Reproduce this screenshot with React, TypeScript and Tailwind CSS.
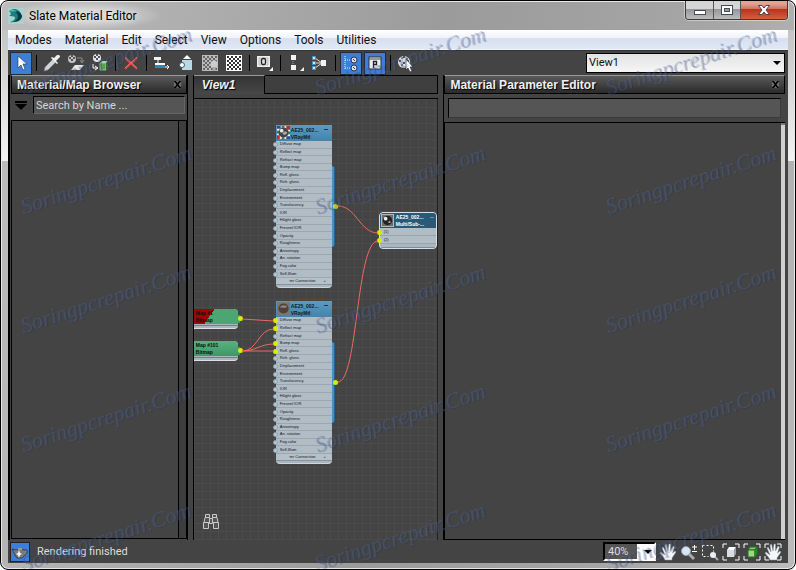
import React from 'react';

const menus = ['Modes', 'Material', 'Edit', 'Select', 'View', 'Options', 'Tools', 'Utilities'];

const slots = [
  'Diffuse map', 'Reflect map', 'Refract map', 'Bump map', 'Refl. gloss.', 'Refr. gloss.',
  'Displacement', 'Environment', 'Translucency', 'IOR', 'Hilight gloss', 'Fresnel IOR',
  'Opacity', 'Roughness', 'Anisotropy', 'An. rotation', 'Fog color', 'Self-Illum',
];

const stampColumns = [24, 318, 609];
const stampRows = [99, 218, 337, 456, 575];

type IconProps = { children: React.ReactNode; size?: string };

const Icon: React.FC<IconProps> = ({ children, size = 'w-[18px] h-[18px]' }) => (
  <svg viewBox="0 0 18 18" className={`${size} shrink-0`} aria-hidden="true">{children}</svg>
);

const ToolButton: React.FC<{ label: string; active?: boolean; children: React.ReactNode }> = ({ label, active, children }) => (
  <button
    type="button"
    aria-label={label}
    className={`h-[23px] flex items-center justify-center shrink-0 ${active ? 'w-[22px] mx-px bg-[#3c7fd9] border border-[#262b33]' : 'w-6'}`}
  >
    {children}
  </button>
);

const Separator = () => (
  <div className="w-[7px] h-6 flex items-center justify-center shrink-0">
    <div className="w-px h-4 bg-black"></div>
  </div>
);

const checkerCells = Array.from({ length: 49 }, (_, i) => i).filter((i) => i % 2 === 0);

const Checker: React.FC<{ light?: string; dark?: string }> = ({ light = '#fff', dark = '#333' }) => (
  <g>
    <rect x="1" y="1" width="16" height="16" fill={light} />
    {checkerCells.map((i) => (
      <rect key={i} x={2 + (i % 7) * 2} y={2 + Math.floor(i / 7) * 2} width="2" height="2" fill={dark} />
    ))}
  </g>
);

const Ball: React.FC<{ cx: number; cy: number; r?: number; light?: string }> = ({ cx, cy, r = 4, light = '#e6eaee' }) => (
  <g>
    <circle cx={cx} cy={cy} r={r} fill={light} />
    <path
      d={`M${cx - r + 1} ${cy - 2}h2v2h-2z M${cx + r - 3} ${cy - 2}h2v2h-2z M${cx - 1} ${cy}h2v2h-2z M${cx - 1} ${cy - r}h2v2h-2z`}
      fill="#555"
    />
  </g>
);

const Corners = () => (
  <path d="M1 5V1h4 M13 1h4v4 M17 13v4h-4 M5 17H1v-4" fill="none" stroke="#fff" strokeWidth="1" />
);

const Cube: React.FC<{ green?: boolean }> = ({ green }) => (
  <g stroke={green ? '#137a13' : 'none'}>
    <path d="M5 7l2-3h7l-2 3z" fill={green ? '#8bc46b' : '#fff'} />
    <path d="M5 7h7v7H5z" fill={green ? '#a8d18a' : '#d9dde3'} />
    <path d="M12 7l2-3v7l-2 3z" fill={green ? '#3d9b2f' : '#9aa1ab'} />
  </g>
);

const Hand = () => (
  <path
    d="M6 17c-1-3-3-4-5-7l1-1 4 3L3 5l1-1 3 5L6 2l1.500-1L9 8l1-7 1.500 0L11.500 8 14 3l1.500 1L13.500 10l2.500-2 1 1-4 6v2z"
    fill="#f4f6f8"
    stroke="#8d959c"
    strokeWidth=".5"
  />
);

const PanelTitle: React.FC<{ title: string }> = ({ title }) => (
  <div className="h-[19px] flex items-center justify-between pl-[5px] pr-1 border border-black border-t-[#999] bg-gradient-to-b from-[#5a5a5a] to-[#2b2b2b]">
    <h2 className="text-xs font-bold text-[#f0f0f0] [text-shadow:1px_1px_1px_#000] whitespace-nowrap">{title}</h2>
    <button type="button" aria-label={`Close ${title}`} className="w-[9px] h-[9px]">
      <svg viewBox="0 0 9 9" className="w-[9px] h-[9px]" aria-hidden="true">
        <path d="M2 2l5 5M7 2L2 7" stroke="#777" strokeWidth="4" />
        <path d="M1 1h2l5 7H6zM6 1h2L3 8H1z" fill="#000" />
      </svg>
    </button>
  </div>
);

const MaterialNode: React.FC<{ place: string; linked: number[]; brown?: boolean }> = ({ place, linked, brown }) => (
  <div className={`absolute w-14 ${place}`}>
    <div className="absolute left-14 top-[41px] w-[3px] h-[81px] rounded-r-sm bg-[#4a90c0] border-r border-[#2b6086]"></div>
    <div className="absolute left-[57px] top-[79px] w-[5px] h-[5px] rounded-full bg-[#d4f000]"></div>
    <div className="rounded-b-[4px] overflow-hidden border-b border-[#ccd5dc] bg-[#a9b5bf]">
      <div className="h-4 flex items-start bg-gradient-to-b from-[#5c9cc4] to-[#4484ac] pl-px pt-px">
        <svg viewBox="0 0 14 14" className="w-[13px] h-[13px] shrink-0" aria-hidden="true">
          <rect width="14" height="14" fill={brown ? '#777' : '#eee'} />
          {!brown && (
            <g>
              <path d="M0 0h4v3H0zM10 11h4v3h-4z" fill="#294f9c" />
              <path d="M10 0h4v4h-4zM0 10h3v4H0z" fill="#b3312c" />
              <path d="M5 0h3v2H5zM12 6h2v3h-2zM0 5h2v3H0zM5 12h3v2H5z" fill="#2f7c3f" />
            </g>
          )}
          <circle cx="7" cy="7" r="5.500" fill={brown ? '#4f423c' : '#44454c'} />
          {brown ? (
            <path d="M3 6c2-3 5-3 8-1-2 2-6 1-8 1z" fill="#9c8478" />
          ) : (
            <g>
              <circle cx="5" cy="5" r="2" fill="#e4e6ea" />
              <path d="M6 8c2-3 4-2 5-1-1 3-4 3-5 1z" fill="#b5a9a4" />
            </g>
          )}
        </svg>
        <div className="flex-1 min-w-0 pl-px pt-px text-[5px] leading-[7px] font-bold text-[#0d1c28] whitespace-nowrap">
          <p>AE25_002...</p>
          <p>VRayMtl</p>
        </div>
        <div className="w-1 h-px mr-1 mt-[3px] bg-[#1b3a50] shrink-0"></div>
      </div>
      <ul className="h-[137px] flex flex-col">
        {slots.map((slot) => (
          <li key={slot} className="flex-1 min-h-0 flex items-center pl-1 text-[4px] leading-[6px] text-[#10181f] border-b border-[#9ba7b1] bg-[#b1bcc5]">
            {slot}
          </li>
        ))}
      </ul>
      <div className="h-[6px] flex items-center justify-center gap-2 pl-2 text-[4px] leading-[6px] text-[#10181f] bg-[#b6c0c8]">
        <span>mr Connection</span>
        <span>+</span>
      </div>
      <div className="h-[3px] border-t border-[#8794a0]"></div>
    </div>
    <div className="absolute left-[-3px] top-4 h-[137px] flex flex-col">
      {slots.map((slot, i) => (
        <div key={slot} className="flex-1 min-h-0 flex items-center">
          <div className={`w-[5px] h-[5px] rounded-full ${linked.includes(i) ? 'bg-[#d4f000]' : 'bg-[#b3c6d6] border border-[#8fa2b2]'}`}></div>
        </div>
      ))}
    </div>
  </div>
);

const BitmapNode: React.FC<{ place: string; name: string; missing?: boolean }> = ({ place, name, missing }) => (
  <div className={`absolute left-0 w-11 ${place}`}>
    <div className="absolute left-11 top-[6px] w-[2px] h-2 bg-[#3c9a63]"></div>
    <div className="absolute left-[44px] top-[7px] w-[5px] h-[5px] rounded-full bg-[#d4f000]"></div>
    <div className="rounded-br-[4px] rounded-tr-sm overflow-hidden bg-[#a9b5bf] border-b border-[#d8dee3]">
      <div className={`h-[15px] pl-[2px] pt-px text-[5px] leading-[7px] font-bold text-[#08150d] whitespace-nowrap ${missing ? 'bg-[linear-gradient(125deg,#9c0606_0_38%,#4ba673_38%)]' : 'bg-gradient-to-b from-[#57b281] to-[#3f9765]'}`}>
        <p>{name}</p>
        <p>Bitmap</p>
      </div>
      <div className="h-[2px] border-b border-[#717f8b]"></div>
      <div className="h-[2px]"></div>
    </div>
  </div>
);

const MultiNode = () => (
  <div className="absolute left-[185px] top-[113px] w-[58px]">
    <div className="absolute left-[58px] top-[9px] w-[2px] h-5 bg-[#3d7fae] border-y border-[#a9d0e8]"></div>
    <div className="rounded-b-[4px] rounded-t-sm overflow-hidden border border-[#d7dee3] bg-[#a9b5bf]">
      <div className="h-[15px] flex items-start bg-[#2a5877] pl-px pt-px">
        <svg viewBox="0 0 14 14" className="w-[13px] h-[13px] shrink-0" aria-hidden="true">
          <rect width="14" height="14" fill="#6d6d6d" />
          <rect x=".5" y=".5" width="13" height="13" fill="none" stroke="#bbb" />
          <circle cx="7" cy="7" r="5" fill="#222" />
          <circle cx="5" cy="5" r="2" fill="#eee" />
          <path d="M7 9l3-2v3z" fill="#aaa" />
        </svg>
        <div className="flex-1 min-w-0 pl-[2px] text-[5px] leading-[7px] font-bold text-white whitespace-nowrap">
          <p>AE25_002...</p>
          <p>Multi/Sub-...</p>
        </div>
        <div className="w-1 h-px mr-[2px] mt-[3px] bg-[#5f93b5] shrink-0"></div>
      </div>
      <ul className="text-[4px] leading-[6px] text-[#10181f]">
        <li className="h-2 pl-1 pt-px border-b border-[#98a4ae] bg-[#b1bcc5]">(1)</li>
        <li className="h-2 pl-1 pt-px border-b border-[#98a4ae] bg-[#b1bcc5]">(2)</li>
      </ul>
      <div className="h-[4px] border-b border-[#7d8b97]"></div>
    </div>
    <div className="absolute left-[-2px] top-[18px] w-[5px] h-[5px] bg-[#d4f000] rounded-full"></div>
    <div className="absolute left-[-2px] top-[26px] w-[5px] h-[5px] bg-[#d4f000] rounded-full"></div>
  </div>
);

const Toolbar = () => (
  <div className="h-[25px] flex items-center justify-between pl-px pr-[3px] bg-[#444] border-t border-[#333]">
    <div className="flex items-center">
      <ToolButton label="Select Tool" active>
        <Icon><path d="M6 2v12l3-3 2 5 2-1-2-5h4z" fill="#fff" stroke="#234" strokeWidth=".6" /></Icon>
      </ToolButton>
      <Separator />
      <ToolButton label="Pick Material from Object">
        <Icon>
          <path d="M1 17l1-4 8-8 3 3-8 8z" fill="#cfd3d6" stroke="#6f7478" strokeWidth=".7" />
          <path d="M8 4l6 6 1-1-2-2 4-4c0-2-1-2-3-2l-3 3-2-1z" fill="#eceff1" />
        </Icon>
      </ToolButton>
      <ToolButton label="Put Material to Scene">
        <Icon>
          <Ball cx={5} cy={5} light="#c4c4c4" />
          <path d="M10 4h5v4M13 6l2 3 2-3" stroke="#8a8a8a" fill="none" />
          <path d="M4 16l4-5h9l-4 5z" fill="#e8e8e8" />
        </Icon>
      </ToolButton>
      <ToolButton label="Assign Material to Selection">
        <Icon>
          <Ball cx={6} cy={4} />
          <path d="M2 10v4h4M4 12l3 2-3 2" stroke="#fff" fill="none" />
          <path d="M9 9l2-2h6l-2 2z" fill="#b6dba5" />
          <path d="M9 9h6v7H9z" fill="#5ea24d" stroke="#b6dba5" strokeWidth=".7" />
          <path d="M15 9l2-2v7l-2 2z" fill="#286b1f" />
        </Icon>
      </ToolButton>
      <Separator />
      <ToolButton label="Delete Selected">
        <Icon>
          <path d="M3 4l12 11M15 4L3 15" stroke="#d8433c" strokeWidth="2" />
          <path d="M3 3l12 11M15 3L3 14" stroke="#f2948f" strokeWidth=".7" />
        </Icon>
      </ToolButton>
      <Separator />
      <ToolButton label="Move Children">
        <Icon>
          <path d="M1 3h7v3H1z" fill="#f2f2f2" />
          <path d="M2 9h10v2H2z" fill="#fff" />
          <path d="M2 11h10v3H2z" fill="#2f86bd" />
          <path d="M5 6v3M12 13h4M14 11l2 2-2 2" stroke="#fff" fill="none" />
        </Icon>
      </ToolButton>
      <ToolButton label="Hide Unused Nodeslots">
        <Icon>
          <path d="M6 5l4-4 4 4z" fill="#fff" />
          <path d="M5 6h10v10H5z" fill="#b8d8e6" />
          <circle cx="5" cy="11" r="2.500" fill="#fff" stroke="#456" />
        </Icon>
      </ToolButton>
      <ToolButton label="Show Background">
        <Icon>
          <Checker light="#bbb" dark="#666" />
          <circle cx="13" cy="10" r="3.500" fill="#ccc" />
          <path d="M11.500 13h3v4h-3z" fill="#aaa" />
        </Icon>
      </ToolButton>
      <ToolButton label="Show Checker in Viewport">
        <Icon><Checker /></Icon>
      </ToolButton>
      <Separator />
      <ToolButton label="Material ID Channel">
        <Icon>
          <rect x="1" y="2" width="13" height="11" fill="#eee" />
          <rect x="3" y="4" width="9" height="7" fill="#ddd" stroke="#999" strokeWidth=".5" />
          <rect x="5.500" y="4.500" width="4" height="6" rx="1.500" fill="none" stroke="#222" strokeWidth="1.300" />
          <path d="M17 13v4h-4z" fill="#fff" />
        </Icon>
      </ToolButton>
      <Separator />
      <ToolButton label="Lay Out All">
        <Icon><path d="M4 1h5v5H4zM4 11h5v5H4zM17 13v4h-4z" fill="#f2f2f2" /><path d="M6 7v3" stroke="#aaa" strokeDasharray="1 1" /></Icon>
      </ToolButton>
      <ToolButton label="Lay Out Children">
        <Icon>
          <path d="M4 4l7 5-7 5M4 9h7" stroke="#ddd" fill="none" />
          <path d="M1 2h4v4H1zM1 7h4v4H1zM1 12h4v4H1z" fill="#3f92cc" />
          <path d="M2 3h2v2H2zM2 8h2v2H2zM2 13h2v2H2z" fill="#cfe8f8" />
          <path d="M10 6h5v6h-5z" fill="#f2f2f2" />
        </Icon>
      </ToolButton>
      <Separator />
      <ToolButton label="Material/Map Browser" active>
        <Icon>
          <path d="M3 2v13M3 6h5M3 14h5" stroke="#e6eefa" strokeDasharray="1 1" fill="none" />
          <circle cx="12" cy="6" r="3" fill="#d6dee5" stroke="#334" />
          <circle cx="12" cy="14" r="3" fill="#d6dee5" stroke="#334" />
          <path d="M11 5h1v1h-1zM12 6h1v1h-1zM11 13h1v1h-1zM12 14h1v1h-1z" fill="#445" />
        </Icon>
      </ToolButton>
      <ToolButton label="Parameter Editor" active>
        <Icon>
          <rect x="3" y="3" width="12" height="12" fill="#e9eef3" stroke="#333" />
          <path d="M3 5h12" stroke="#444" />
          <path d="M7.500 7.500h3v3h-3zM7.500 8v6" stroke="#222" strokeWidth="1.300" fill="none" />
        </Icon>
      </ToolButton>
      <Separator />
      <ToolButton label="Select by Material">
        <Icon>
          <Ball cx={7} cy={8} r={6} />
          <path d="M4 3h2v2H4zM9 4h2v2H9zM4 10h2v2H4z" fill="#888" />
          <path d="M9 5v11l2-2 2 4 2-1-2-4h3z" fill="#fff" stroke="#222" strokeWidth=".6" />
        </Icon>
      </ToolButton>
    </div>
    <div className="relative w-[199px] h-5">
      <select aria-label="Active view" className="appearance-none block w-full h-full pl-[2px] text-[11px] leading-4 text-[#111] bg-gradient-to-b from-[#e2e2e2] to-[#f6f6f6] border border-black font-[Roboto,sans-serif]">
        <option>View1</option>
      </select>
      <svg viewBox="0 0 8 4" className="absolute right-1 top-2 w-2 h-1 pointer-events-none" aria-hidden="true"><path d="M0 0h8L4 4z" /></svg>
    </div>
  </div>
);

const BrowserPanel = () => (
  <section className="flex flex-col border-x border-black pl-px min-w-0">
    <PanelTitle title="Material/Map Browser" />
    <div className="flex items-start gap-[6px] pt-[2px] pl-1 pr-[2px] h-[26px]">
      <button type="button" aria-label="Browser options" className="w-3 h-[18px] flex items-center">
        <svg viewBox="0 0 12 9" className="w-3 h-[9px]" aria-hidden="true"><path d="M0 0h12v2H0zM0 3h12L6 9z" /></svg>
      </button>
      <input
        aria-label="Search by Name"
        placeholder="Search by Name ..."
        className="flex-1 min-w-0 h-[18px] px-[2px] text-[11px] bg-[#555] border border-[#666] border-t-black border-l-black placeholder:text-[#d6d6d6] placeholder:opacity-100 font-[Roboto,sans-serif]"
      />
    </div>
    <div className="flex-1 flex pb-px">
      <div className="flex-1 border border-black"></div>
      <div className="w-2 border-y border-r border-black bg-[#3d3d3d]"></div>
    </div>
  </section>
);

const GraphPanel = () => (
  <section className="flex flex-col border-l border-black min-w-0">
    <div className="h-[19px] flex shrink-0">
      <button type="button" className="w-[71px] pl-2 text-left text-xs leading-[18px] font-bold italic text-[#f0f0f0] bg-gradient-to-b from-[#333] to-[#484848] border-t border-r border-t-[#999] border-r-black [text-shadow:1px_1px_1px_#000]">
        View1
      </button>
      <div className="flex-1 border border-black border-l-0 bg-[#3f3f3f]"></div>
    </div>
    <div className="h-[5px] border-b border-black shrink-0"></div>
    <div className="flex-1 relative overflow-hidden border-r border-[#222] bg-[#444] bg-[linear-gradient(#4b4b4b_1px,transparent_1px),linear-gradient(90deg,#4b4b4b_1px,transparent_1px)] bg-size-[8px_8px]">
      <BitmapNode place="top-[210px]" name="Map #1" missing />
      <BitmapNode place="top-[242px]" name="Map #101" />
      <MaterialNode place="left-[82px] top-[26px]" linked={[]} />
      <MaterialNode place="left-[82px] top-[202px]" linked={[0, 1, 3, 4]} brown />
      <MultiNode />
      <svg className="absolute inset-0 w-full h-full" aria-hidden="true">
        <g fill="none" stroke="#f0685f" strokeWidth="1">
          <path d="M48 220L80 222" />
          <path d="M48 252C64 252 64 230 80 230" />
          <path d="M48 252C62 252 66 245 80 245" />
          <path d="M48 252H80" />
          <path d="M144 107C162 107 166 134 184 134" />
          <path d="M144 283C164 283 162 142 184 142" />
        </g>
      </svg>
      <button type="button" aria-label="Find" className="absolute left-2 bottom-[10px] w-[18px] h-[18px]">
        <Icon>
          <g fill="#555" stroke="#c9c9c9">
            <path d="M3.500 2.500h4v3h-4zM10.500 2.500h4v3h-4z" />
            <path d="M3 5.500h4.500l.5 5H2zM10.500 5.500H15l1 5h-6z" />
            <path d="M1.500 10.500h5v6h-5zM11.500 10.500h5v6h-5zM7.500 6.500h3v5h-3z" />
          </g>
        </Icon>
      </button>
    </div>
  </section>
);

const ParameterPanel = () => (
  <section className="flex flex-col border-l border-black pr-[3px] min-w-0">
    <PanelTitle title="Material Parameter Editor" />
    <div className="px-1 pt-1 h-7">
      <input
        aria-label="Material name"
        className="block w-full h-5 px-1 text-[11px] text-white bg-[#555] border border-[#3a3a3a] border-t-black border-l-black font-[Roboto,sans-serif]"
      />
    </div>
    <div className="flex-1 flex border-y border-l border-black">
      <div className="flex-1"></div>
      <div className="w-1 bg-[#d0d0d0] border-t-2 border-[#777]"></div>
    </div>
  </section>
);

const StatusBar = () => (
  <footer className="h-[23px] flex items-center justify-between pl-[2px] pr-[6px] bg-[#444]">
    <div className="flex items-center gap-[7px]">
      <button type="button" aria-label="Render" className="w-5 h-5 flex items-center justify-center bg-[#3c7fd9] border border-[#222]">
        <Icon>
          <path d="M1 6l4 1c2-1 6-1 8 0 3-1 4 1 3 3s-2 2-3 3l-2 2H6L4 12z" fill="#7b7b7b" stroke="#222" strokeWidth=".7" />
          <path d="M7 5h4v2H7z" fill="#999" />
          <path d="M8 7l1 3 2 1-2 1-1 3-1-3-2-1 2-1z" fill="#fff" />
        </Icon>
      </button>
      <p className="pt-px text-[11px] text-[#ddd]">Rendering finished</p>
    </div>
    <div className="flex items-center gap-[3px]">
      <div className="relative w-[53px] h-[19px]">
        <select aria-label="Zoom level" className="appearance-none block w-full h-full pl-[3px] text-[11px] text-[#ddd] bg-[linear-gradient(90deg,#555_0_32px,#fff_32px)] border-2 border-black border-r-white border-b-white font-[Roboto,sans-serif]">
          <option>40%</option>
        </select>
        <svg viewBox="0 0 8 4" className="absolute right-1 top-2 w-2 h-1 pointer-events-none" aria-hidden="true"><path d="M0 0h8L4 4z" /></svg>
      </div>
      <button type="button" aria-label="Pan"><Icon><Hand /></Icon></button>
      <button type="button" aria-label="Zoom">
        <Icon>
          <path d="M9 11l5 5" stroke="#aaa" strokeWidth="3" />
          <circle cx="6" cy="8" r="4.500" fill="#d9e6f2" stroke="#8fa3b5" />
          <path d="M12 4h5M14.500 2v5M12 8.500h5" stroke="#fff" />
        </Icon>
      </button>
      <button type="button" aria-label="Zoom Region">
        <Icon>
          <path d="M1.500 2.500h11v6M1.500 2.500v11h6" fill="none" stroke="#fff" strokeDasharray="2 2" />
          <path d="M13 13l4 4" stroke="#aaa" strokeWidth="2" />
          <circle cx="12" cy="12" r="3" fill="#e8eef4" />
        </Icon>
      </button>
      <button type="button" aria-label="Zoom Extents"><Icon><Corners /><Cube /></Icon></button>
      <button type="button" aria-label="Zoom Extents Selected"><Icon><Corners /><Cube green /></Icon></button>
      <button type="button" aria-label="Pan to Selected"><Icon><Corners /><Hand /></Icon></button>
    </div>
  </footer>
);

const TitleBar = () => (
  <header className="h-[29px] flex items-start justify-between">
    <div className="h-[29px] flex items-center gap-[5px] bg-[radial-gradient(ellipse_at_center,#dcdcdccc_30%,transparent_72%)] pr-6">
      <svg viewBox="0 0 16 16" className="w-4 h-4" aria-hidden="true">
        <rect width="16" height="16" fill="#a7d3cf" />
        <path d="M1 3c5-4 11-2 13 5-1 4-6 7-12 6 4-1 5-3 5-5-2-1-4-1-6-1 2-1 3-2 0-5z" fill="#1b7f80" />
        <path d="M4 4c4-1 6 2 6 5-1 2-2 4-5 5 6 0 9-3 9-6-2-5-6-6-10-4z" fill="#0b3c46" />
        <path d="M1 3c3-2 7-1 8 1-3-1-5 0-8-1z" fill="#4fc2b8" />
      </svg>
      <h1 className="text-xs text-black [text-shadow:0_0_6px_#fff] whitespace-nowrap">Slate Material Editor</h1>
    </div>
    <div className="flex h-[19px] rounded-b-[4px] overflow-hidden border border-t-0 border-[#3a3a3a] shadow-[0_0_0_1px_#ffffff66]">
      <button type="button" aria-label="Minimize" className="w-7 flex items-center justify-center border-r border-[#555] bg-[linear-gradient(#d5d5d5_0_45%,#969696_45%,#bcbcbc)]">
        <svg viewBox="0 0 12 10" className="w-3 h-[10px]" aria-hidden="true"><rect x=".5" y="5.500" width="11" height="4" fill="#fff" stroke="#444b5a" /></svg>
      </button>
      <button type="button" aria-label="Maximize" className="w-[27px] flex items-center justify-center border-r border-[#555] bg-[linear-gradient(#d5d5d5_0_45%,#969696_45%,#bcbcbc)]">
        <svg viewBox="0 0 12 10" className="w-3 h-[10px]" aria-hidden="true">
          <rect x=".5" y=".5" width="11" height="9" fill="#fff" stroke="#444b5a" />
          <rect x="3.500" y="3.500" width="5" height="3" fill="#999" stroke="#444b5a" />
        </svg>
      </button>
      <button type="button" aria-label="Close" className="w-[46px] flex items-center justify-center bg-[linear-gradient(#e0a495_0_15%,#d0705c_45%,#b8321a_45%,#d3603f)]">
        <svg viewBox="0 0 12 10" className="w-3 h-[10px]" aria-hidden="true">
          <path d="M.5.5h3.500l2 2.500L8 .5h3.500L8 5l3.500 4.500H8L6 7 4 9.500H.5L4 5z" fill="#fff" stroke="#50414a" />
        </svg>
      </button>
    </div>
  </header>
);

const Stamps = () => (
  <div className="absolute inset-0 overflow-hidden pointer-events-none" aria-hidden="true">
    {stampRows.map((y) =>
      stampColumns.map((x) => (
        <div key={`${x}-${y}`} className="absolute" style={{ left: x, top: y - 24 }}>
          <span className="block origin-bottom-left -rotate-[18deg] text-[22px] leading-6 italic whitespace-nowrap text-[#4f74a84d] [text-shadow:1px_1px_0_#23286044] font-['Liberation_Serif',serif]">
            Soringpcrepair.Com
          </span>
        </div>
      ))
    )}
  </div>
);

const App: React.FC = () => {
  return (
    <div className="bg-white">
      <main className="relative h-screen flex flex-col px-[7px] pb-[6px] overflow-hidden rounded-[8px] border border-black shadow-[inset_0_0_0_1px_#e8e8e8] bg-[linear-gradient(100deg,#bdbdbd,#a8a8a8_30%,#9b9b9b_50%,#a6a6a6_80%,#bbb)] font-['Liberation_Sans',sans-serif]">
        <div className="absolute inset-x-px top-[29px] h-[131px] bg-gradient-to-b from-[#c4c4c4] to-[#f2f2f2]"></div>
        <div className="relative flex-1 min-h-0 flex flex-col font-[Roboto,sans-serif]">
          <TitleBar />
          <nav className="h-5 shrink-0 flex items-center gap-[13px] pl-[7px] text-xs text-[#111] bg-[linear-gradient(#fff,#f0f3fa_40%,#d8dff0_45%,#e0e7f5)] border-b border-[#f5f5f5]">
            {menus.map((menu) => (
              <button type="button" key={menu}>{menu}</button>
            ))}
          </nav>
          <Toolbar />
          <div className="flex-1 min-h-0 grid grid-cols-[179fr_246fr_345fr] gap-x-[5px] bg-[#444] font-['Liberation_Sans',sans-serif] border-l border-black">
            <BrowserPanel />
            <GraphPanel />
            <ParameterPanel />
          </div>
          <StatusBar />
        </div>
        <Stamps />
      </main>
    </div>
  );
};

export default App;
